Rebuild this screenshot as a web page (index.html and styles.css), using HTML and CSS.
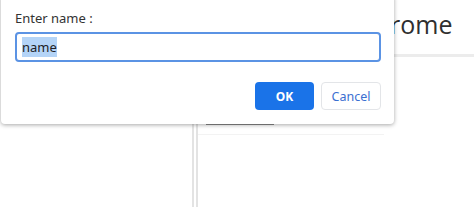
FILE: index.html
```html
<!DOCTYPE html>
<html lang="en">
<head>
    <meta charset="UTF-8">
    <title>Prompt</title>
    <link rel="stylesheet" href="styles.css">
</head>
<body>
    <div class="page">
        <div class="sidebar"></div>
        <div class="divider"></div>
        <div class="main">
            <div class="header">
                <h1>Chrome</h1>
            </div>
            <div class="toolbar">
                <div class="tab"></div>
            </div>
        </div>
    </div>

    <div class="dialog">
        <div class="dialog-label">Enter name :</div>
        <div class="dialog-input"><span class="selected">name</span></div>
        <div class="dialog-buttons">
            <button class="btn btn-ok">OK</button>
            <button class="btn btn-cancel">Cancel</button>
        </div>
    </div>
</body>
</html>
```

FILE: styles.css
```css
body {
    margin: 0;
    width: 474px;
    height: 207px;
    overflow: hidden;
    background: #fff;
    font-family: "Noto Sans", "Open Sans", Arial, sans-serif;
    position: relative;
}
.page {
    display: flex;
    height: 207px;
}
.sidebar {
    width: 192px;
}
.divider {
    width: 2px;
    border-left: 2px solid #e3e3e3;
    border-right: 2px solid #e3e3e3;
}
.main {
    flex: 1;
}
.header {
    height: 54px;
    border-bottom: 3px solid #ececec;
    padding-left: 161px;
}
.header h1 {
    margin: 0;
    padding-top: 7px;
    font-family: "Open Sans", Arial, sans-serif;
    font-weight: 500;
    font-size: 25px;
    color: #2f2f2f;
}
.toolbar {
    height: 77px;
    border-bottom: 1px solid #f3f3f3;
    margin-right: 90px;
}
.tab {
    margin-left: 8px;
    width: 68px;
    height: 66px;
    border-bottom: 2px solid #8a8a8a;
}
.dialog {
    position: absolute;
    left: 1px;
    top: -4px;
    width: 393px;
    height: 128px;
    background: #fff;
    border-radius: 0 0 4px 4px;
    box-shadow: 0 1px 4px rgba(0, 0, 0, 0.35);
    box-sizing: border-box;
    padding: 13px 13px 0 14px;
}
.dialog-label {
    font-size: 13px;
    line-height: 18px;
    color: #333;
}
.dialog-input {
    margin-top: 5px;
    height: 30px;
    width: 366px;
    box-sizing: border-box;
    border: 2px solid #5b93e4;
    border-radius: 4px;
    padding-left: 5px;
    font-size: 13px;
    line-height: 26px;
    color: #202124;
}
.selected {
    background: #b4d4f7;
    padding: 1px 0;
}
.dialog-buttons {
    display: flex;
    justify-content: flex-end;
    gap: 7px;
    margin-top: 20px;
    width: 366px;
}
.btn {
    height: 28px;
    border-radius: 4px;
    font-family: "Noto Sans", "Open Sans", Arial, sans-serif;
    font-size: 12px;
    cursor: pointer;
}
.btn-ok {
    width: 59px;
    background: #1a73e8;
    border: none;
    color: #fff;
    font-weight: bold;
}
.btn-cancel {
    width: 60px;
    background: #fff;
    border: 1px solid #e3e5e8;
    color: #3b6fd1;
    font-size: 12.5px;
}
```
